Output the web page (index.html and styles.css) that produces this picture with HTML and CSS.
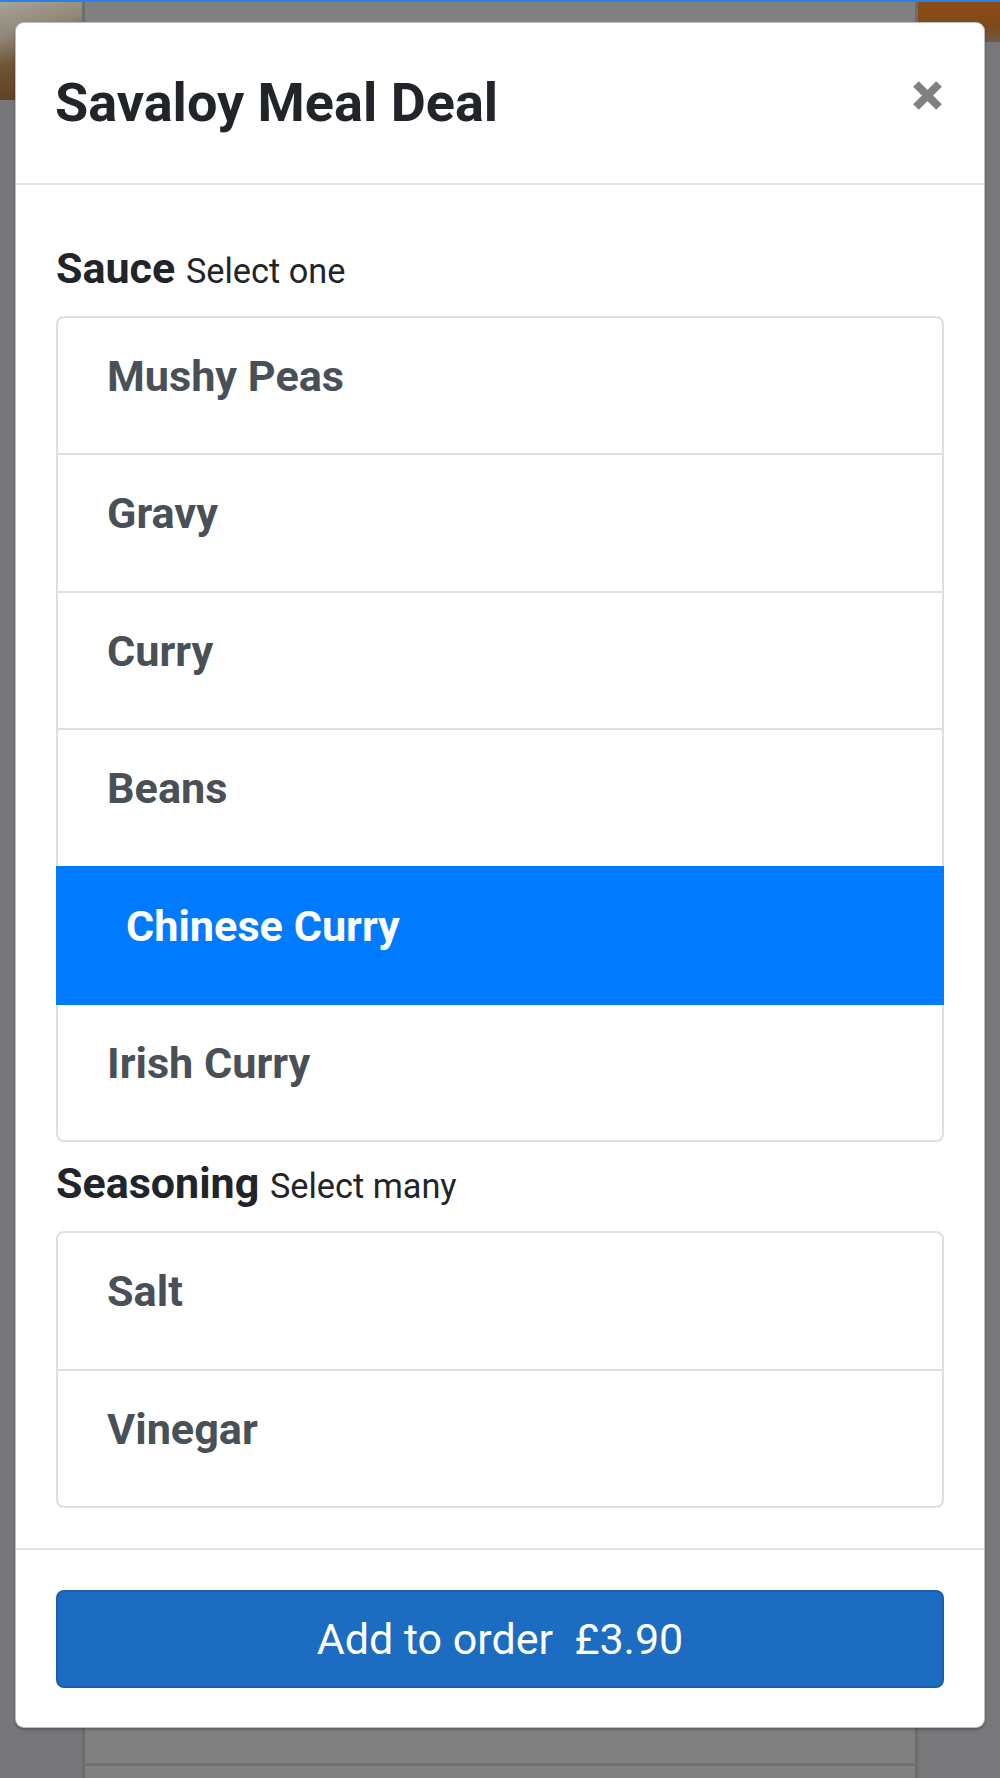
FILE: index.html
```html
<!DOCTYPE html>
<html lang="en">
<head>
<meta charset="utf-8">
<title>Savaloy Meal Deal</title>
<link rel="stylesheet" href="styles.css">
</head>
<body>
<div class="page">
  <div class="col col-left"><div class="photo photo-left"></div></div>
  <div class="col col-center"><div class="spacer"></div><div class="row-end"></div></div>
  <div class="col col-right"><div class="photo photo-right"></div></div>
</div>

<div class="modal" role="dialog">
  <div class="modal-header">
    <h5 class="modal-title">Savaloy Meal Deal</h5>
    <button class="close" type="button" aria-label="Close">
      <svg width="29" height="29" viewBox="0 0 29 29"><path d="M3 3 L26 26 M26 3 L3 26" stroke="#808080" stroke-width="8" fill="none"/></svg>
    </button>
  </div>
  <div class="modal-body">
    <div class="section">
      <div class="section-label">Sauce <small>Select one</small></div>
      <div class="list">
        <div class="item">Mushy Peas</div>
        <div class="item">Gravy</div>
        <div class="item">Curry</div>
        <div class="item">Beans</div>
        <div class="item active">Chinese Curry</div>
        <div class="item">Irish Curry</div>
      </div>
    </div>
    <div class="section section-next">
      <div class="section-label">Seasoning <small>Select many</small></div>
      <div class="list">
        <div class="item">Salt</div>
        <div class="item">Vinegar</div>
      </div>
    </div>
  </div>
  <div class="modal-footer">
    <button class="btn-add" type="button">Add to order&nbsp; £3.90</button>
  </div>
</div>
</body>
</html>
```
FILE: styles.css
```css
html, body {
  margin: 0;
  padding: 0;
}
body {
  width: 1000px;
  height: 1778px;
  overflow: hidden;
  background: #808080;
  font-family: Roboto, "Liberation Sans", Arial, sans-serif;
  position: relative;
}

/* dimmed page behind the modal */
.page {
  display: flex;
  height: 1778px;
  box-sizing: border-box;
  border-top: 2px solid #2a80e8;
}
.col {
  display: flex;
  flex-direction: column;
}
.col-left {
  width: 82px;
  background: #77777a;
  border-right: 3px solid #6d6d6f;
}
.photo-left {
  height: 98px;
  background: linear-gradient(165deg, #a7a396 0%, #8f8676 30%, #6e5335 55%, #5a3918 100%);
}
.col-center {
  flex: 1;
  background: #808080;
}
.spacer {
  flex: 1;
}
.row-end {
  height: 12px;
  border-top: 3px solid #707070;
}
.col-right {
  width: 82px;
  background: #78787b;
  border-left: 3px solid #6d6d6f;
}
.photo-right {
  height: 40px;
  background: linear-gradient(180deg, #8a4d12 0%, #7d4a1c 60%, #6f5a48 100%);
}

/* modal (overlay) */
.modal {
  position: absolute;
  left: 15px;
  top: 22px;
  width: 970px;
  box-sizing: border-box;
  background: #fff;
  border: 1px solid rgba(0, 0, 0, 0.25);
  border-radius: 9px;
  box-shadow: 0 2px 3px rgba(0, 0, 0, 0.25);
}

.modal-header {
  display: flex;
  justify-content: space-between;
  align-items: flex-start;
  box-sizing: border-box;
  height: 162px;
  padding: 40px 42px 0 39px;
  border-bottom: 2px solid #e2e4e8;
}
.modal-title {
  margin: 0;
  font-size: 54px;
  line-height: 79.5px;
  font-weight: 700;
  color: #212529;
}
.close {
  margin: 18px 0 0 0;
  padding: 0;
  border: 0;
  background: transparent;
  width: 29px;
  height: 29px;
  display: block;
}
.close svg {
  display: block;
}

.modal-body {
  padding: 42px 40px 40px 40px;
}
.section-next {
  margin-top: 7.5px;
}
.section-label {
  margin-top: 13px;
  margin-bottom: 19px;
  font-size: 43px;
  line-height: 57px;
  font-weight: 700;
  color: #212529;
}
.section-label small {
  font-size: 34.3px;
  font-weight: 400;
  line-height: 1;
}

.list {
  display: flex;
  flex-direction: column;
  border-radius: 8px;
}
.item {
  position: relative;
  padding: 27px 49px 45.4px 49px;
  line-height: 63px;
  font-size: 43.2px;
  font-weight: 700;
  color: #495057;
  background: #fff;
  border: 2px solid #dfdfdf;
  margin-bottom: -2px;
}
.item:first-child {
  border-top-left-radius: 8px;
  border-top-right-radius: 8px;
}
.item:last-child {
  margin-bottom: 0;
  border-bottom-left-radius: 8px;
  border-bottom-right-radius: 8px;
}
.item.active {
  z-index: 2;
  background: #007bff;
  border-color: #007bff;
  color: #fff;
  padding-left: 68px;
}

.modal-footer {
  border-top: 2px solid #e2e4e8;
  padding: 40px 40px 39px 40px;
}
.btn-add {
  display: block;
  width: 100%;
  height: 98px;
  box-sizing: border-box;
  background: #1c6cc1;
  border: 2px solid #1a5fae;
  border-radius: 8px;
  color: #fff;
  font-family: Roboto, "Liberation Sans", Arial, sans-serif;
  font-size: 43px;
  font-weight: 400;
  line-height: 1;
  padding: 0;
}
```
